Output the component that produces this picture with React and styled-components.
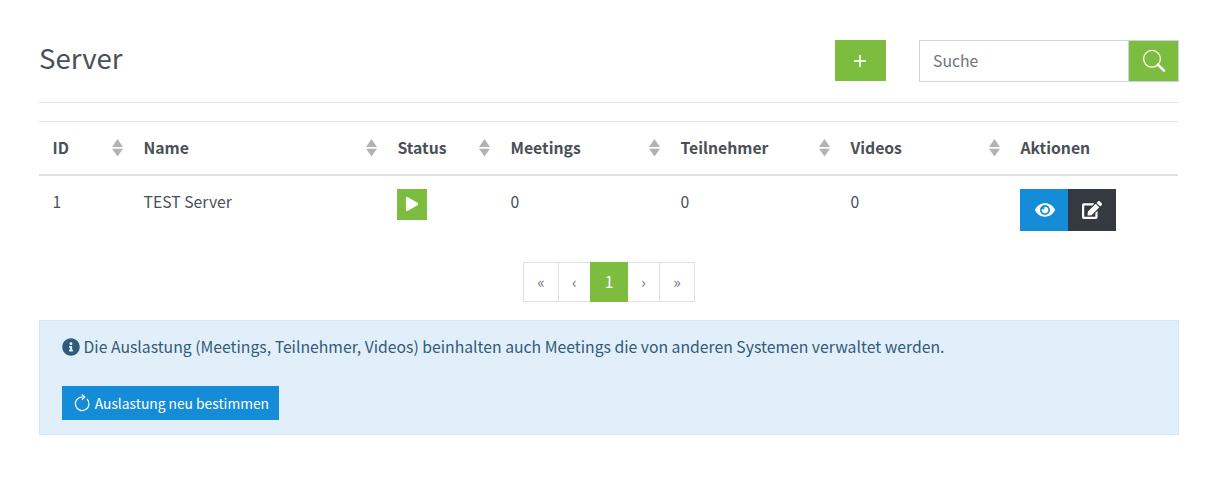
import React from 'react';
import styled, { createGlobalStyle } from 'styled-components';
import { FaPlay, FaEye, FaEdit, FaInfoCircle } from 'react-icons/fa';

const GlobalStyle = createGlobalStyle`
  *, *::before, *::after { box-sizing: border-box; }
  body {
    margin: 0;
    background: #fff;
    color: #495057;
    font: 400 15.75px/26px "Noto Sans CJK JP", "Noto Sans", sans-serif;
  }
  button, input { font: inherit; border: 0; border-radius: 0; padding: 0; }
`;

const Page = styled.main`
  padding: 40px 40px 0 39px;
`;

const Header = styled.header`
  display: flex;
  align-items: flex-start;
  height: 63px;
  border-bottom: 1px solid #e3e4e5;
`;

const Title = styled.h1`
  flex: 1;
  margin: 0;
  font-size: 27.6px;
  font-weight: 400;
  line-height: 34px;
`;

const AddButton = styled.button`
  display: flex;
  align-items: flex-start;
  padding: 15px 0 0 19px;
  width: 51px;
  height: 41px;
  margin-right: 33px;
  background: #7cbc3f;
  color: #fff;
`;

const SearchGroup = styled.div`
  display: flex;
  width: 260px;
  height: 42px;
  border: 1px solid #ced4da;
`;

const SearchInput = styled.input`
  flex: 1;
  min-width: 0;
  padding: 0 13px;
  outline: 0;
  &::placeholder { color: #6c757d; opacity: 1; }
`;

const SearchButton = styled.button`
  display: grid;
  place-items: center;
  width: 50px;
  border-left: 1px solid #ced4da;
  background: #7cbc3f;
  color: #fff;
`;

const Table = styled.table`
  width: 1139px;
  margin-top: 18px;
  table-layout: fixed;
  border-collapse: separate;
  border-spacing: 0;
`;

const HeadCell = styled.th`
  width: ${(p) => p.$width}px;
  height: 55px;
  padding: 0 7px 0 13.5px;
  border-top: 1px solid #dee2e6;
  border-bottom: 2px solid #dee2e6;
  text-align: left;
  font-weight: 700;
`;

const HeadLabel = styled.div`
  display: flex;
  align-items: center;
  justify-content: space-between;
`;

const Cell = styled.td`
  height: 69px;
  padding: 13px 0 0 ${(p) => (p.$control ? 13 : 13.5)}px;
  vertical-align: top;
`;

const StatusButton = styled.button`
  display: flex;
  align-items: flex-start;
  justify-content: center;
  padding-top: 8px;
  width: 30px;
  height: 31px;
  background: #7cbc3f;
  color: #fff;
`;

const Actions = styled.div`
  display: flex;
`;

const ActionButton = styled.button`
  display: grid;
  place-items: center;
  width: 48px;
  height: 42px;
  padding: ${(p) => (p.$dark ? '0 0 1px' : '0 0 1px 2px')};
  background: ${(p) => (p.$dark ? '#343a40' : '#158cd8')};
  color: #fff;
`;

const Pagination = styled.nav`
  display: flex;
  justify-content: center;
  margin-top: 17px;
`;

const PageButton = styled.button`
  width: ${(p) => p.$width}px;
  height: 40px;
  margin-left: ${(p) => (p.$joined ? -1 : 0)}px;
  padding-bottom: 1px;
  border: 1px solid ${(p) => (p.$active ? '#7cbc3f' : '#dee2e6')};
  background: ${(p) => (p.$active ? '#7cbc3f' : '#fff')};
  color: ${(p) => (p.$active ? '#fff' : '#6c757d')};
  position: relative;
  z-index: ${(p) => (p.$active ? 1 : 0)};
`;

const Notice = styled.section`
  height: 115px;
  margin-top: 18px;
  padding: 13px 22px;
  border: 1px solid #d3e6f4;
  background: #e1effa;
  color: #315b78;
`;

const NoticeText = styled.p`
  display: flex;
  align-items: center;
  gap: 3.5px;
  margin: 0 0 26px;
  white-space: nowrap;
`;

const RefreshButton = styled.button`
  display: flex;
  align-items: center;
  gap: 4.5px;
  width: 217px;
  height: 34px;
  padding: 0 10px 0 11.5px;
  background: #158cd8;
  color: #fff;
  font-size: 13.8px;
  white-space: nowrap;
`;

const PlusIcon = () => (
  <svg width="12" height="12" viewBox="0 0 12 12" fill="none" stroke="currentColor" strokeOpacity="0.85" strokeWidth="2">
    <path d="M6 0v12M0 6h12" />
  </svg>
);

const SearchIcon = () => (
  <svg width="24" height="24" viewBox="0 0 24 24" fill="none" stroke="currentColor">
    <circle cx="10" cy="9.8" r="8.4" strokeWidth="1.3" />
    <path d="M15.8 15.6 22 21.6" strokeWidth="2.6" strokeLinecap="round" />
  </svg>
);

const RefreshIcon = () => (
  <svg width="17" height="18" viewBox="0 0 17 18" fill="none" stroke="currentColor" strokeWidth="1.2">
    <path d="M13.2 4.9A6.9 6.9 0 1 1 8 2.9h2.8M8 .4l2.9 2.6L8 5.7" />
  </svg>
);

const SortIcon = () => (
  <svg width="11" height="18" viewBox="0 0 11 18" fill="#b3b3b3">
    <path d="M5.5 0 11 8H0zM0 9.7h11L5.5 17.5z" />
  </svg>
);

const columns = [
  ['ID', 91],
  ['Name', 254],
  ['Status', 113],
  ['Meetings', 170],
  ['Teilnehmer', 170],
  ['Videos', 170],
  ['Aktionen', 171],
];

const pages = [
  ['«', 36],
  ['‹', 33],
  ['1', 38],
  ['›', 33],
  ['»', 36],
];

export default function App() {
  return (
    <>
      <GlobalStyle />
      <Page>
        <Header>
          <Title>Server</Title>
          <AddButton aria-label="Hinzufügen"><PlusIcon /></AddButton>
          <SearchGroup>
            <SearchInput placeholder="Suche" />
            <SearchButton aria-label="Suche"><SearchIcon /></SearchButton>
          </SearchGroup>
        </Header>
        <Table>
          <thead>
            <tr>
              {columns.map(([label, width]) => (
                <HeadCell key={label} $width={width}>
                  <HeadLabel>
                    {label}
                    {label !== 'Aktionen' && <SortIcon />}
                  </HeadLabel>
                </HeadCell>
              ))}
            </tr>
          </thead>
          <tbody>
            <tr>
              <Cell>1</Cell>
              <Cell>TEST Server</Cell>
              <Cell $control>
                <StatusButton aria-label="Status"><FaPlay size={14} /></StatusButton>
              </Cell>
              <Cell>0</Cell>
              <Cell>0</Cell>
              <Cell>0</Cell>
              <Cell $control>
                <Actions>
                  <ActionButton aria-label="Ansehen"><FaEye size={20} /></ActionButton>
                  <ActionButton $dark aria-label="Bearbeiten"><FaEdit size={20} /></ActionButton>
                </Actions>
              </Cell>
            </tr>
          </tbody>
        </Table>
        <Pagination>
          {pages.map(([label, width], i) => (
            <PageButton key={label} $width={width} $joined={i > 0} $active={label === '1'}>
              {label}
            </PageButton>
          ))}
        </Pagination>
        <Notice>
          <NoticeText>
            <FaInfoCircle size={18} />
            Die Auslastung (Meetings, Teilnehmer, Videos) beinhalten auch Meetings die von anderen Systemen verwaltet werden.
          </NoticeText>
          <RefreshButton>
            <RefreshIcon />
            Auslastung neu bestimmen
          </RefreshButton>
        </Notice>
      </Page>
    </>
  );
}
